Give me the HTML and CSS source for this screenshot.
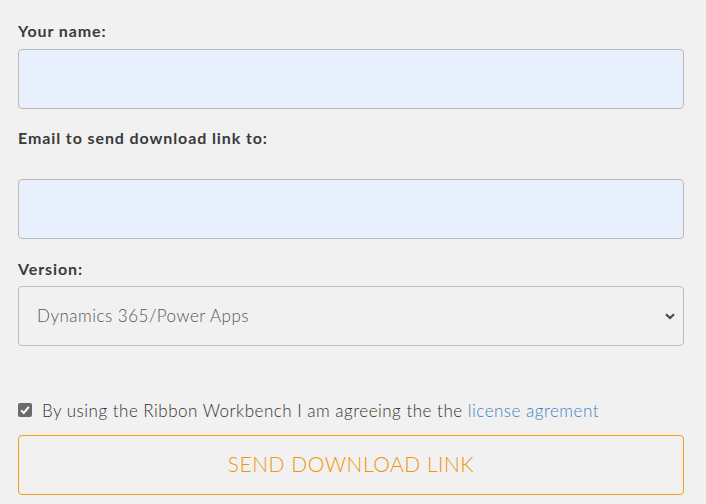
FILE: index.html
```html
<!DOCTYPE html>
<html>
<head>
<meta charset="utf-8">
<link rel="stylesheet" href="styles.css">
</head>
<body>
<form class="form">
  <label class="label label-first" for="name">Your name:</label>
  <input class="field" id="name" type="text">
  <label class="label label-email" for="email">Email to send download link to:</label>
  <input class="field field-email" id="email" type="email">
  <label class="label label-version" for="version">Version:</label>
  <div class="select-wrap">
    <select class="select" id="version">
      <option>Dynamics 365/Power Apps</option>
    </select>
    <svg class="chev" width="10" height="7" viewBox="0 0 10 7"><path d="M1 1.2 L5 5 L9 1.2" fill="none" stroke="#444" stroke-width="2"/></svg>
  </div>
  <div class="agree">
    <span class="check"><svg width="14" height="14" viewBox="0 0 14 14"><rect width="14" height="14" rx="2" fill="#6b6b6b"/><path d="M3.2 7.4 L5.8 10 L10.8 3.8" fill="none" stroke="#fff" stroke-width="2"/></svg></span>
    <span class="agree-text">By using the Ribbon Workbench I am agreeing the the <a class="link" href="#">license agrement</a></span>
  </div>
  <button class="btn" type="button">SEND DOWNLOAD LINK</button>
</form>
</body>
</html>
```
FILE: styles.css
```css
html, body {
  margin: 0;
  background: #f1f1f1;
}
body {
  font-family: "Lato", "Liberation Sans", sans-serif;
  color: #333;
}
.form {
  display: flex;
  flex-direction: column;
  padding: 20px 22px 0 18px;
}
.label {
  font-weight: 700;
  font-size: 16px;
  line-height: 22px;
  color: #3a3a3a;
  letter-spacing: 0.9px;
}
.label-first { margin-bottom: 7px; }
.label-email { margin-top: 18px; margin-bottom: 30px; }
.label-version { margin-top: 19px; margin-bottom: 6px; }
.field {
  box-sizing: border-box;
  height: 60px;
  width: 100%;
  margin: 0;
  border: 1px solid #b9b9b9;
  border-radius: 4px;
  background: #e8f0fe;
  outline: none;
}
.select-wrap {
  position: relative;
  height: 60px;
}
.select {
  box-sizing: border-box;
  appearance: none;
  -webkit-appearance: none;
  width: 100%;
  height: 60px;
  margin: 0;
  border: 1px solid #bdbdbd;
  border-radius: 4px;
  background: #f1f1f1;
  padding: 0 18px 2px;
  font-family: "Lato", "Liberation Sans", sans-serif;
  font-weight: 300;
  font-size: 17px;
  letter-spacing: 0.5px;
  color: #555;
}
.chev {
  position: absolute;
  right: 9px;
  top: 27px;
  pointer-events: none;
}
.agree {
  display: flex;
  align-items: center;
  gap: 10px;
  margin-top: 53px;
  height: 22px;
  font-size: 17px;
  font-weight: 300;
  letter-spacing: 0.5px;
  color: #333;
}
.check { display: flex; }
.link {
  color: #3b82c4;
  text-decoration: none;
}
.btn {
  box-sizing: border-box;
  margin-top: 14px;
  height: 60px;
  width: 100%;
  padding: 0 0 3px;
  border: 1px solid #f29f1b;
  border-radius: 4px;
  background: transparent;
  color: #f0960c;
  font-family: "Lato", "Liberation Sans", sans-serif;
  font-weight: 300;
  font-size: 21px;
  letter-spacing: 0.5px;
}
```
